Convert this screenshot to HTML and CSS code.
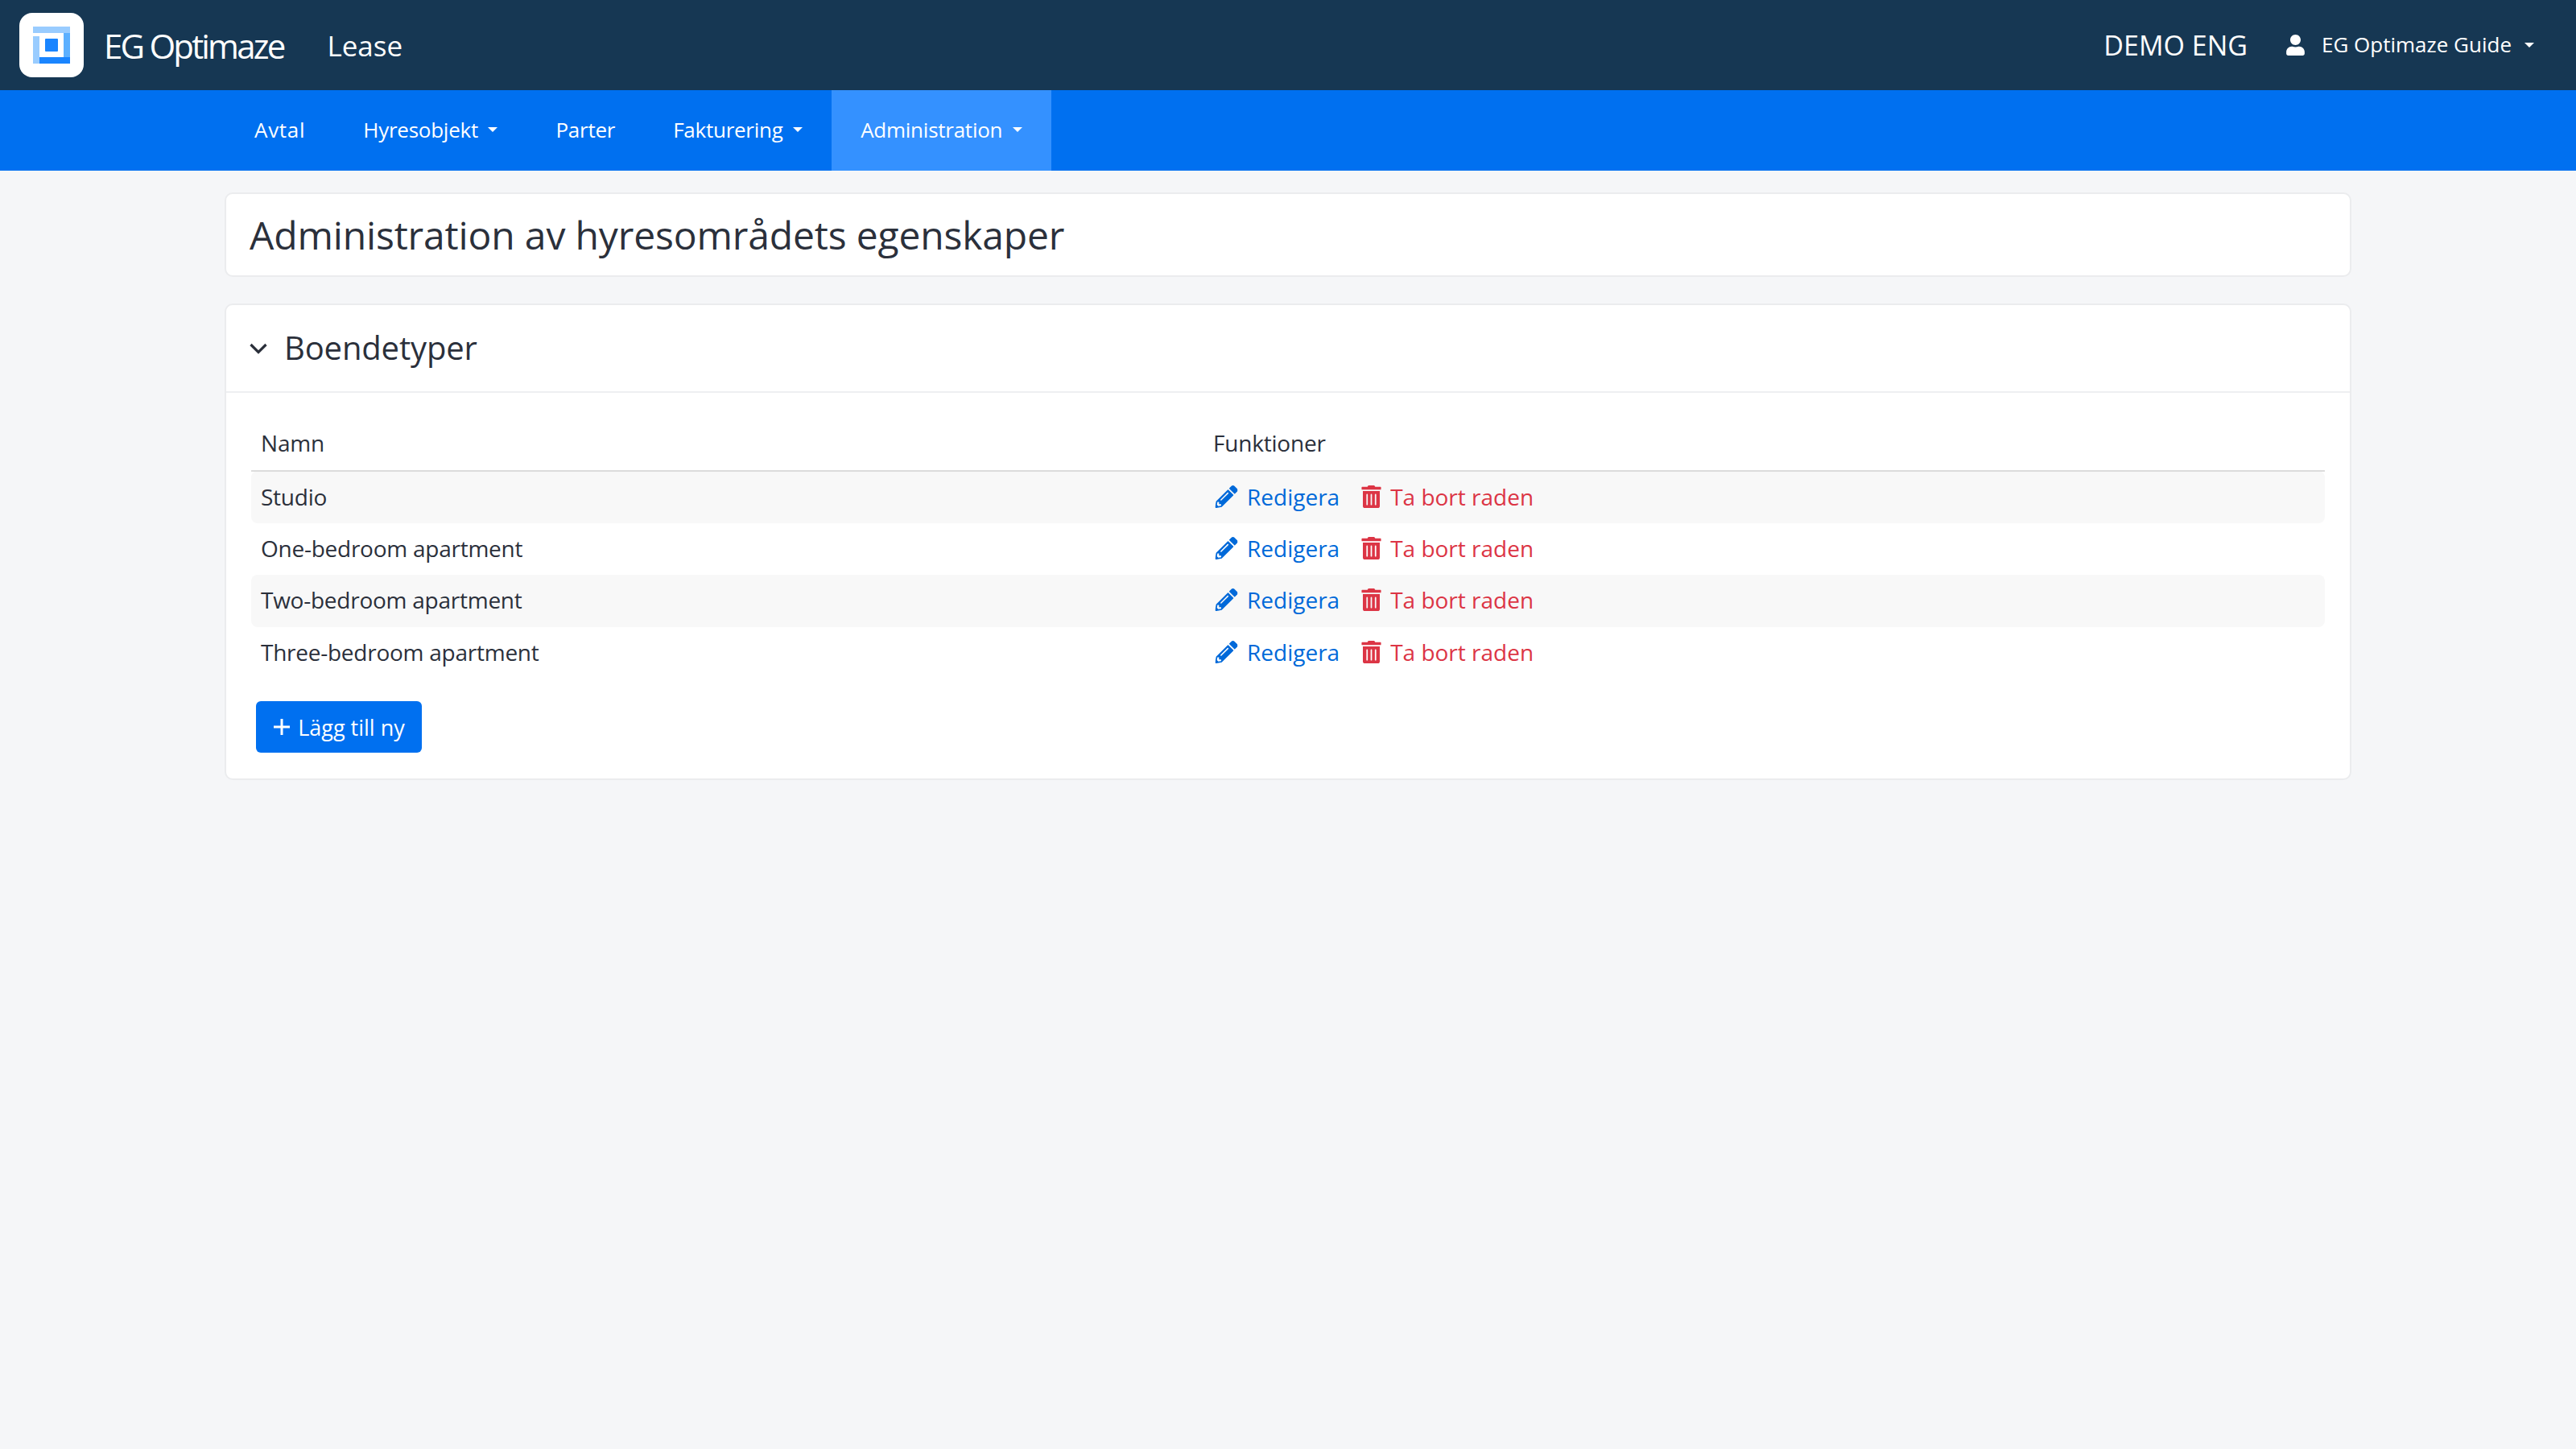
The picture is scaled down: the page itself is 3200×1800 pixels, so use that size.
FILE: index.html
```html
<!DOCTYPE html>
<html lang="sv">
<head>
  <meta charset="UTF-8" />
  <title>EG Optimaze Lease</title>
  <link rel="stylesheet" href="styles.css">
</head>
<body>

  <header class="topbar">
    <div class="logo">
      <svg viewBox="0 0 46 46" width="46" height="46">
        <rect x="0" y="0" width="46" height="8" fill="#99ccff"/>
        <rect x="0" y="12" width="8" height="34" fill="#99ccff"/>
        <rect x="38" y="8" width="8" height="30" fill="#5cb0ff"/>
        <rect x="8" y="38" width="38" height="8" fill="#1a85ff"/>
        <rect x="15" y="15" width="16" height="16" rx="1" fill="#1a85ff"/>
      </svg>
    </div>
    <span class="brand">EG Optimaze</span>
    <span class="product">Lease</span>
    <span class="tenant">DEMO ENG</span>
    <div class="user">
      <svg class="user-icon" viewBox="0 0 448 512"><path d="M224 256c70.7 0 128-57.3 128-128S294.7 0 224 0 96 57.3 96 128s57.3 128 128 128zm89.6 32h-16.7c-22.2 10.2-46.9 16-72.9 16s-50.6-5.8-72.9-16h-16.7C60.2 288 0 348.2 0 422.4V464c0 26.5 21.5 48 48 48h352c26.5 0 48-21.5 48-48v-41.6c0-74.2-60.2-134.4-134.4-134.4z"/></svg>
      <span class="user-name">EG Optimaze Guide</span>
      <span class="caret"></span>
    </div>
  </header>

  <nav class="mainnav">
    <a class="nav-item wide">Avtal</a>
    <a class="nav-item">Hyresobjekt <span class="caret"></span></a>
    <a class="nav-item">Parter</a>
    <a class="nav-item">Fakturering <span class="caret"></span></a>
    <a class="nav-item active">Administration <span class="caret"></span></a>
  </nav>

  <main class="container">
    <section class="card title-card">
      <h1>Administration av hyresområdets egenskaper</h1>
    </section>

    <section class="card">
      <div class="card-header">
        <svg class="chevron" viewBox="0 0 22 14"><path d="M1.5 2l9.5 9.5L20.5 2" fill="none" stroke="#2b303b" stroke-width="3.2"/></svg>
        <h2>Boendetyper</h2>
      </div>
      <div class="card-body">
        <table class="grid">
          <thead>
            <tr><th class="col-name">Namn</th><th>Funktioner</th></tr>
          </thead>
          <tbody>
            <tr>
              <td class="name">Studio</td>
              <td>
                <div class="actions">
                  <a class="action edit"><svg viewBox="0 0 512 512"><use href="#pencil"/></svg>Redigera</a>
                  <a class="action remove"><svg viewBox="0 0 448 512"><use href="#trash"/></svg>Ta bort raden</a>
                </div>
              </td>
            </tr>
            <tr>
              <td class="name">One-bedroom apartment</td>
              <td>
                <div class="actions">
                  <a class="action edit"><svg viewBox="0 0 512 512"><use href="#pencil"/></svg>Redigera</a>
                  <a class="action remove"><svg viewBox="0 0 448 512"><use href="#trash"/></svg>Ta bort raden</a>
                </div>
              </td>
            </tr>
            <tr>
              <td class="name">Two-bedroom apartment</td>
              <td>
                <div class="actions">
                  <a class="action edit"><svg viewBox="0 0 512 512"><use href="#pencil"/></svg>Redigera</a>
                  <a class="action remove"><svg viewBox="0 0 448 512"><use href="#trash"/></svg>Ta bort raden</a>
                </div>
              </td>
            </tr>
            <tr>
              <td class="name">Three-bedroom apartment</td>
              <td>
                <div class="actions">
                  <a class="action edit"><svg viewBox="0 0 512 512"><use href="#pencil"/></svg>Redigera</a>
                  <a class="action remove"><svg viewBox="0 0 448 512"><use href="#trash"/></svg>Ta bort raden</a>
                </div>
              </td>
            </tr>
          </tbody>
        </table>
        <button class="btn">
          <svg viewBox="0 0 22 22"><path d="M11 1v20M1 11h20" fill="none" stroke="#fff" stroke-width="3"/></svg>
          Lägg till ny
        </button>
      </div>
    </section>
  </main>

  <svg class="defs" width="0" height="0">
    <symbol id="pencil" viewBox="0 0 512 512"><path d="M497.9 142.1l-46.1 46.1c-4.7 4.7-12.3 4.7-17 0l-111-111c-4.7-4.7-4.7-12.3 0-17l46.1-46.1c18.7-18.7 49.1-18.7 67.9 0l60.1 60.1c18.8 18.7 18.8 49.1 0 67.9zM284.2 99.8L21.6 362.4.4 483.9c-2.9 16.4 11.4 30.6 27.8 27.8l121.5-21.3 262.6-262.6c4.7-4.7 4.7-12.3 0-17l-111-111c-4.8-4.7-12.4-4.7-17.1 0zM124.1 339.9c-5.5-5.5-5.5-14.3 0-19.8l154-154c5.5-5.5 14.3-5.5 19.8 0s5.5 14.3 0 19.8l-154 154c-5.5 5.5-14.3 5.5-19.8 0zM88 424h48v36.3l-64.5 11.3-31.1-31.1L51.7 376H88v48z"/></symbol>
    <symbol id="trash" viewBox="0 0 448 512"><path d="M32 464a48 48 0 0 0 48 48h288a48 48 0 0 0 48-48V128H32zm272-256a16 16 0 0 1 32 0v224a16 16 0 0 1-32 0zm-96 0a16 16 0 0 1 32 0v224a16 16 0 0 1-32 0zm-96 0a16 16 0 0 1 32 0v224a16 16 0 0 1-32 0zM432 32H312l-9.4-18.7A24 24 0 0 0 281.1 0H166.8a23.72 23.72 0 0 0-21.4 13.3L136 32H16A16 16 0 0 0 0 48v32a16 16 0 0 0 16 16h416a16 16 0 0 0 16-16V48a16 16 0 0 0-16-16z"/></symbol>
  </svg>

</body>
</html>
```

FILE: styles.css
```css
body {
  margin: 0;
  font-family: "Open Sans", "Noto Sans", sans-serif;
  font-size: 28px;
  background: #f5f6f8;
  color: #2b303b;
  min-height: 1800px;
}

/* top bar */
.topbar {
  height: 112px;
  background: #163753;
  color: #fff;
  display: flex;
  align-items: center;
  padding: 0 52px 0 24px;
}

.logo {
  width: 80px;
  height: 80px;
  background: #fff;
  border-radius: 16px;
  display: flex;
  align-items: center;
  justify-content: center;
}

.brand {
  margin-left: 25px;
  font-size: 42px;
  letter-spacing: -2.8px;
}

.product {
  margin-left: 54px;
  font-size: 35px;
}

.tenant {
  margin-left: auto;
  font-size: 34px;
}

.user {
  margin-left: 48px;
  display: flex;
  align-items: center;
}

.user-icon {
  width: 23px;
  height: 26px;
  fill: #fff;
}

.user-name {
  margin-left: 21px;
  font-size: 26px;
  padding-bottom: 2px;
}

.user .caret {
  margin-left: 16px;
}

.caret {
  display: inline-block;
  width: 0;
  height: 0;
  border-top: 6px solid #fff;
  border-left: 6px solid transparent;
  border-right: 6px solid transparent;
  vertical-align: 3px;
  margin-left: 6px;
}

/* main nav */
.mainnav {
  height: 100px;
  background: #0070f0;
  display: flex;
  padding-left: 280px;
}

.nav-item {
  display: flex;
  align-items: center;
  padding: 0 36px 2px;
  color: #fff;
  font-size: 26px;
  letter-spacing: -0.25px;
  white-space: pre;
}

.nav-item.wide {
  letter-spacing: 0.7px;
}

.nav-item.active {
  background: #3491ff;
}

/* content */
.container {
  width: 2642px;
  margin: 27px auto 0;
}

.card {
  background: #fff;
  border: 2px solid #ebecee;
  border-radius: 10px;
  margin-bottom: 33px;
}

.title-card {
  height: 105px;
  box-sizing: border-box;
  display: flex;
  align-items: center;
  padding-left: 29px;
}

h1 {
  margin: 0;
  font-size: 48px;
  font-weight: 400;
  letter-spacing: -0.15px;
}

.card-header {
  height: 107px;
  display: flex;
  align-items: center;
  padding-left: 29px;
  border-bottom: 2px solid #eeeff1;
}

.chevron {
  width: 22px;
  height: 14px;
}

h2 {
  margin: 0 0 0 21px;
  padding-bottom: 3px;
  font-size: 40px;
  font-weight: 400;
  letter-spacing: -0.15px;
}

.card-body {
  padding: 43px 31px 32px 31px;
}

/* table */
.grid {
  width: 100%;
  border-collapse: collapse;
}

.grid th {
  text-align: left;
  font-weight: 500;
  letter-spacing: -0.2px;
  padding: 0 12px 15px;
  height: 38px;
  border-bottom: 2px solid #dcdcdc;
}

.col-name {
  width: 1159px;
}

.grid td {
  height: 64.5px;
  padding: 0 12px 2px;
  box-sizing: border-box;
}

.grid .name {
  letter-spacing: -0.25px;
}

.grid tbody tr:nth-child(odd) td {
  background: #f8f8f8;
}

.grid tbody tr:nth-child(odd) td:first-child {
  border-radius: 8px 0 0 8px;
}

.grid tbody tr:nth-child(odd) td:last-child {
  border-radius: 0 8px 8px 0;
}

.actions {
  display: flex;
  gap: 27px;
  padding-left: 2px;
}

.action {
  display: flex;
  align-items: center;
  gap: 11px;
}

.action svg {
  height: 28px;
}

.edit {
  color: #0069d9;
  fill: #0069d9;
}

.edit svg {
  width: 29px;
}

.remove {
  color: #dc3545;
  fill: #dc3545;
}

.remove svg {
  width: 25px;
}

.btn {
  margin: 28px 0 0 6px;
  width: 206px;
  height: 64px;
  border: none;
  border-radius: 6px;
  background: #0070f0;
  color: #fff;
  font-family: inherit;
  font-size: 27px;
  display: flex;
  align-items: center;
  justify-content: center;
  gap: 9px;
}

.btn svg {
  width: 22px;
  height: 22px;
}

.defs {
  position: absolute;
}
```
